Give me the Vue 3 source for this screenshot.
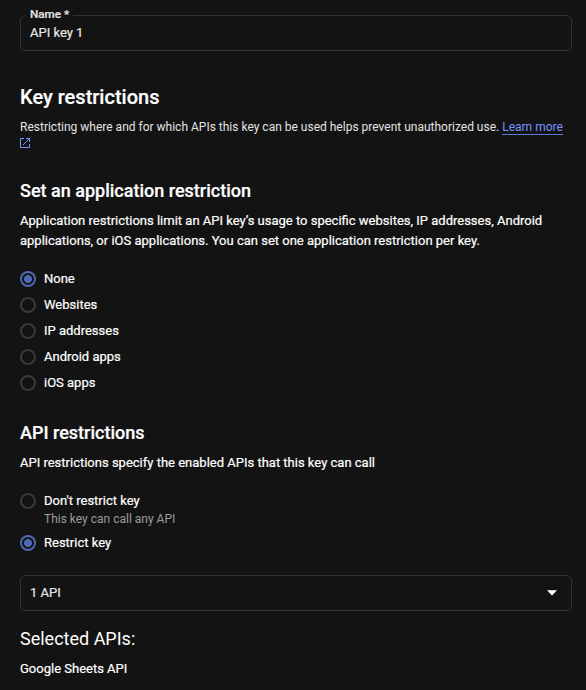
<script setup>
import { ref } from 'vue'

const appOptions = ['None', 'Websites', 'IP addresses', 'Android apps', 'iOS apps']
const appRestriction = ref('None')
const keyOptions = [
  { label: "Don't restrict key", hint: 'This key can call any API' },
  { label: 'Restrict key' },
]
const keyRestriction = ref('Restrict key')
</script>

<template>
  <main class="page">
    <div class="field">
      <span class="field-label">Name *</span>
      <span class="field-value">API key 1</span>
    </div>

    <h1 class="title">Key restrictions</h1>
    <p class="intro">
      Restricting where and for which APIs this key can be used helps prevent unauthorized use. <a class="link">Learn more</a>
      <svg class="external" viewBox="0 0 10 10" fill="none" stroke="currentColor">
        <path d="M4 .5H.5v9h9V6M6 .5h3.500V4M9.300.7 3 7" />
      </svg>
    </p>

    <h2 class="heading">Set an application restriction</h2>
    <p class="text">
      Application restrictions limit an API key’s usage to specific websites, IP addresses, Android<br />
      applications, or iOS applications. You can set one application restriction per key.
    </p>
    <div class="radios">
      <div v-for="o in appOptions" :key="o" class="radio" @click="appRestriction = o">
        <span class="dot" :class="{ on: appRestriction === o }"></span>
        <span class="radio-label">{{ o }}</span>
      </div>
    </div>

    <h2 class="heading second">API restrictions</h2>
    <p class="text">API restrictions specify the enabled APIs that this key can call</p>
    <div class="radios">
      <div v-for="o in keyOptions" :key="o.label" class="option" @click="keyRestriction = o.label">
        <div class="radio">
          <span class="dot" :class="{ on: keyRestriction === o.label }"></span>
          <span class="radio-label">{{ o.label }}</span>
        </div>
        <div v-if="o.hint" class="hint">{{ o.hint }}</div>
      </div>
    </div>

    <div class="field select">
      <span class="field-value">1 API</span>
      <svg class="caret" viewBox="0 0 10 6"><path d="M0 .3h10L5 5.500z" fill="#fff" /></svg>
    </div>

    <h3 class="selected">Selected APIs:</h3>
    <p class="text api">Google Sheets API</p>
  </main>
</template>

<style>
body {
  background: #131313;
}
</style>

<style scoped>
.page {
  box-sizing: border-box;
  height: 690px;
  overflow: hidden;
  padding: 15px 14px 0 20px;
  background: #131313;
  color: #fff;
  font-family: Roboto, "Liberation Sans", sans-serif;
  font-size: 13px;
  font-weight: 400;
}
h1, h2, h3, p {
  margin: 0;
}
.field {
  position: relative;
  box-sizing: border-box;
  display: flex;
  align-items: center;
  justify-content: space-between;
  height: 36px;
  padding: 0 14px 0 9px;
  border: 1px solid #323335;
  border-radius: 5px;
}
.field-label {
  position: absolute;
  left: 4px;
  top: -9px;
  padding: 0 4px 0 5px;
  background: #131313;
  color: #e3e3e3;
  font-size: 11.700px;
  font-weight: 500;
  line-height: 14px;
  white-space: nowrap;
}
.field-value {
  color: #e8e8e8;
  line-height: 20px;
}
.field-value,
.field-label,
.text,
.radio-label,
.title,
.heading {
  -webkit-text-stroke: 0.2px currentColor;
}
.caret {
  width: 10px;
  height: 6px;
}
.title {
  margin-top: 32px;
  font-size: 20px;
  font-weight: 500;
  line-height: 28px;
}
.intro {
  margin-top: 8px;
  color: #e3e3e3;
  font-size: 12px;
  line-height: 16px;
}
.link {
  color: #7695ff;
  border-bottom: 1px solid #5c79d6;
}
.external {
  display: block;
  width: 10px;
  height: 10px;
  margin-top: 3px;
  color: #7695ff;
}
.heading {
  margin-top: 31px;
  font-size: 18px;
  font-weight: 500;
  line-height: 24px;
}
.text {
  margin-top: 8px;
  line-height: 20px;
}
.radios {
  margin-top: 18px;
  display: flex;
  flex-direction: column;
  gap: 6px;
}
.radio {
  display: flex;
  align-items: center;
  gap: 8px;
  height: 20px;
}
.radio-label {
  line-height: 20px;
}
.dot {
  box-sizing: border-box;
  width: 16px;
  height: 16px;
  border: 2px solid #3a3a3a;
  border-radius: 50%;
}
.dot.on {
  border-color: #4f68b4;
  background: radial-gradient(circle, #4f68b4 3.700px, transparent 4.300px);
}
.hint {
  margin-left: 24px;
  color: #9c9c9c;
  font-size: 12px;
  line-height: 16px;
}
.second {
  margin-top: 28px;
}
.select {
  margin-top: 22px;
}
.selected {
  margin-top: 16px;
  font-size: 18px;
  font-weight: 400;
  line-height: 24px;
}
</style>
